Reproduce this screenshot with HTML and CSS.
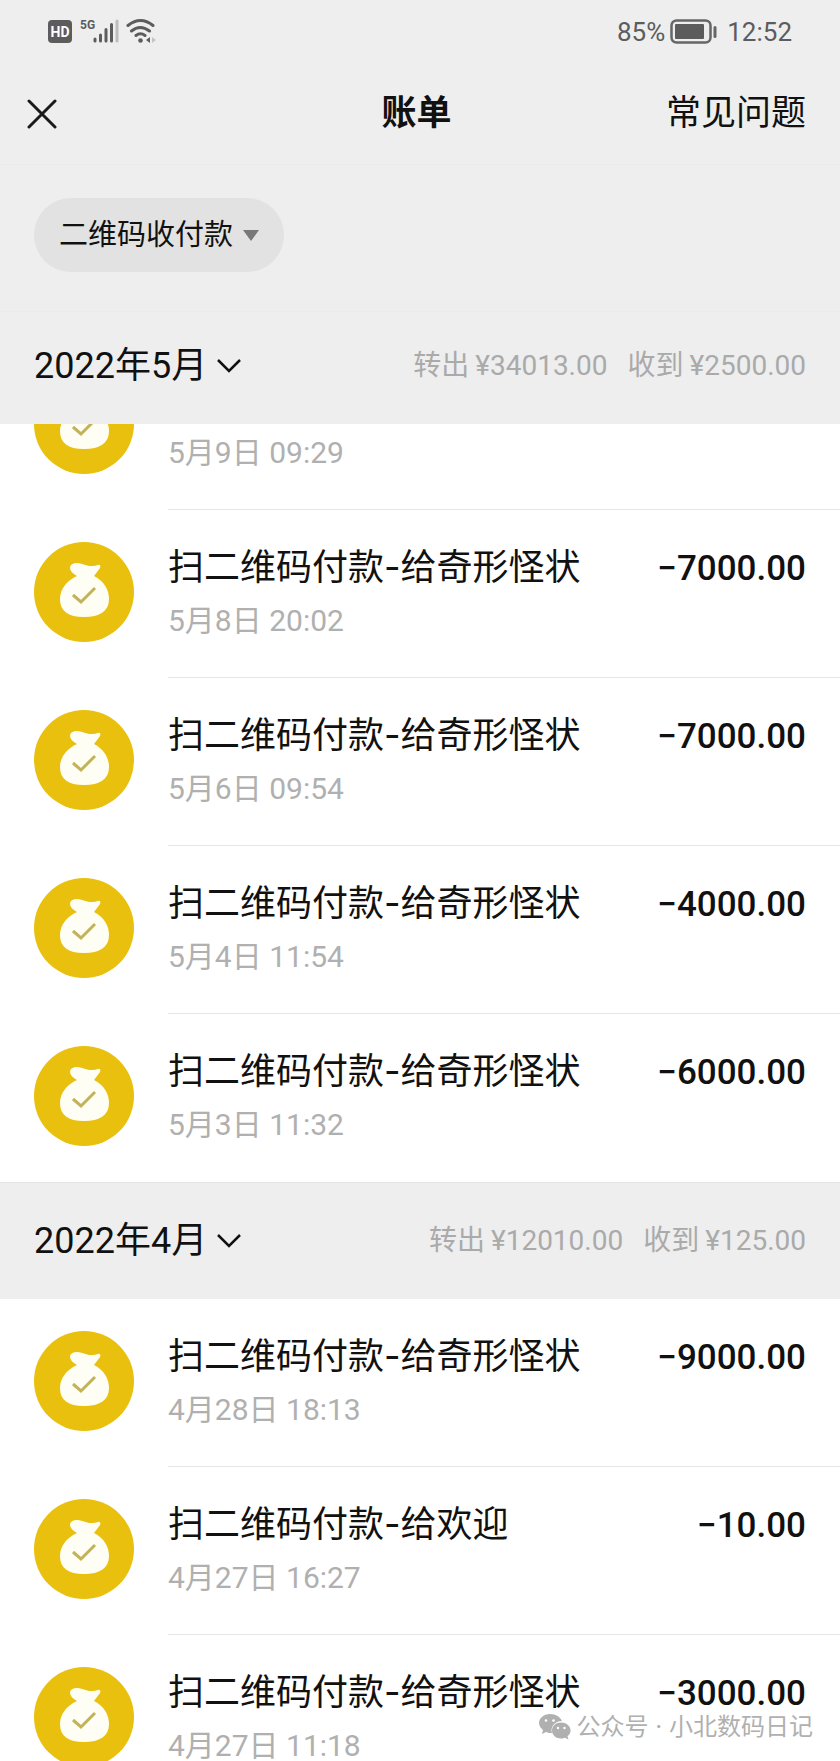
FILE: index.html
```html
<!DOCTYPE html>
<html lang="zh-CN">
<head>
<meta charset="utf-8">
<meta name="viewport" content="width=device-width, initial-scale=1">
<title>账单</title>
<link rel="stylesheet" href="styles.css">
</head>
<body>
<svg class="defs" aria-hidden="true">
  <symbol id="bag" viewBox="0 0 100 100">
    <circle cx="50" cy="50" r="50" fill="#e9c00e"/>
    <path fill="#fffef4" d="M36 25c1-4 7-5 12-3 6 2 11 3 16 1 2-1 3 1 2 3l-6 8c10 5 15 14 15 23 0 12-9 18-25 18s-24-6-24-18c0-9 6-18 17-23-3-2-7-4-7-9z"/>
    <path fill="none" stroke="#c3b258" stroke-width="3" d="M39 53l8 7 14-14"/>
  </symbol>
  <symbol id="chevron" viewBox="0 0 24 14">
    <path fill="none" stroke="#111" stroke-width="2.500" d="M1 1l11 11L23 1"/>
  </symbol>
</svg>

<div class="app">
  <div class="status">
    <svg class="status-icons" viewBox="0 0 110 28" aria-hidden="true">
      <rect x="0" y="2" width="24" height="23" rx="4" fill="#5c5c5c"/>
      <text class="hd" x="12" y="19" text-anchor="middle">HD</text>
      <text class="net" x="32" y="11">5G</text>
      <g stroke="#5c5c5c" stroke-width="3" stroke-linecap="round">
        <path d="M47 21v2M52.500 17v6M58 11.500V23M63.500 6.500V23"/>
        <path stroke="#bdbdbd" d="M69 3v20"/>
      </g>
      <g fill="none" stroke="#5c5c5c" stroke-width="3" stroke-linecap="round">
        <path d="M80 7.500q12.500-10 25 0M83.500 13q8.500-7 18 0M88 17.500q4.500-3.500 9 0"/>
      </g>
      <circle cx="92.500" cy="22.500" r="2.300" fill="#5c5c5c"/>
      <path fill="#5c5c5c" d="M98 22l4-3v6z"/>
      <path fill="#c4c4c4" d="M108 22l-4-3v6z"/>
    </svg>
    <div class="status-group">
      <span>85%</span>
      <svg class="battery" viewBox="0 0 48 26" aria-hidden="true">
        <rect x="1.500" y="1.500" width="39" height="22" rx="5" fill="none" stroke="#666" stroke-width="2.500"/>
        <rect x="5" y="5" width="29" height="15" rx="1" fill="#5c5c5c"/>
        <path stroke="#666" stroke-width="3" stroke-linecap="round" d="M45 8.500v9"/>
      </svg>
      <span>12:52</span>
    </div>
  </div>

  <header class="nav">
    <button class="close" type="button" aria-label="关闭">
      <svg viewBox="0 0 30 30" aria-hidden="true"><path fill="none" stroke="#1a1a1a" stroke-width="3" stroke-linecap="round" d="M2 2l26 26M28 2L2 28"/></svg>
    </button>
    <h1 class="title">账单</h1>
    <a class="help" href="#">常见问题</a>
  </header>

  <div class="filter">
    <button class="pill" type="button">二维码收付款<svg viewBox="0 0 16 11" aria-hidden="true"><path fill="#787878" d="M0 0h16L8 11z"/></svg></button>
  </div>

  <main class="bills">
    <section>
      <div class="month month-top">
        <button class="month-pick" type="button">2022年5月<svg aria-hidden="true"><use href="#chevron"/></svg></button>
        <p class="totals"><span>转出</span><span>¥34013.00</span><span class="in">收到</span><span>¥2500.00</span></p>
      </div>
      <ul class="list">
        <li class="row row-cut">
          <svg class="avatar" aria-hidden="true"><use href="#bag"/></svg>
          <div class="body"><div class="text"><time class="date">5月9日 09:29</time></div></div>
        </li>
        <li class="row">
          <svg class="avatar" aria-hidden="true"><use href="#bag"/></svg>
          <div class="body"><div class="text"><span class="name">扫二维码付款-给奇形怪状</span><time class="date">5月8日 20:02</time></div><span class="amount">−7000.00</span></div>
        </li>
        <li class="row">
          <svg class="avatar" aria-hidden="true"><use href="#bag"/></svg>
          <div class="body"><div class="text"><span class="name">扫二维码付款-给奇形怪状</span><time class="date">5月6日 09:54</time></div><span class="amount">−7000.00</span></div>
        </li>
        <li class="row">
          <svg class="avatar" aria-hidden="true"><use href="#bag"/></svg>
          <div class="body"><div class="text"><span class="name">扫二维码付款-给奇形怪状</span><time class="date">5月4日 11:54</time></div><span class="amount">−4000.00</span></div>
        </li>
        <li class="row">
          <svg class="avatar" aria-hidden="true"><use href="#bag"/></svg>
          <div class="body"><div class="text"><span class="name">扫二维码付款-给奇形怪状</span><time class="date">5月3日 11:32</time></div><span class="amount">−6000.00</span></div>
        </li>
      </ul>
    </section>
    <section>
      <div class="month">
        <button class="month-pick" type="button">2022年4月<svg aria-hidden="true"><use href="#chevron"/></svg></button>
        <p class="totals"><span>转出</span><span>¥12010.00</span><span class="in">收到</span><span>¥125.00</span></p>
      </div>
      <ul class="list">
        <li class="row">
          <svg class="avatar" aria-hidden="true"><use href="#bag"/></svg>
          <div class="body"><div class="text"><span class="name">扫二维码付款-给奇形怪状</span><time class="date">4月28日 18:13</time></div><span class="amount">−9000.00</span></div>
        </li>
        <li class="row">
          <svg class="avatar" aria-hidden="true"><use href="#bag"/></svg>
          <div class="body"><div class="text"><span class="name">扫二维码付款-给欢迎</span><time class="date">4月27日 16:27</time></div><span class="amount">−10.00</span></div>
        </li>
        <li class="row">
          <svg class="avatar" aria-hidden="true"><use href="#bag"/></svg>
          <div class="body"><div class="text"><span class="name">扫二维码付款-给奇形怪状</span><time class="date">4月27日 11:18</time></div><span class="amount">−3000.00</span></div>
        </li>
      </ul>
    </section>
  </main>

  <div class="watermark">
    <svg viewBox="0 0 32 26" aria-hidden="true">
      <path fill="#b0b0b0" d="M11 0C5 0 0 4 0 9c0 3 2 5 4 7l-1 4 4-2c2 1 4 1 6 1-2-6 3-12 10-12C21 3 17 0 11 0z"/>
      <path fill="#b0b0b0" d="M22 8.500c-5 0-9 3.500-9 8s4 8 9 8c1.500 0 3-.3 4-.8l3.500 1.800-1-3.200c2-1.500 3-3.500 3-5.800 0-4.500-4.500-8-9.500-8z"/>
      <g fill="#fff"><circle cx="7" cy="6.500" r="1.300"/><circle cx="14.500" cy="6.500" r="1.300"/><circle cx="19" cy="14" r="1.200"/><circle cx="25.500" cy="14" r="1.200"/></g>
    </svg>
    <span>公众号 · 小北数码日记</span>
  </div>
</div>
</body>
</html>
```
FILE: styles.css
```css
* {
  box-sizing: border-box;
}

body,
h1,
p,
ul {
  margin: 0;
  padding: 0;
}

body {
  background: #fff;
  color: #111;
  font-family: Roboto, "Noto Sans CJK SC", sans-serif;
}

button {
  border: 0;
  padding: 0;
  background: none;
  color: inherit;
  font: inherit;
}

.defs {
  display: none;
}

.app {
  position: relative;
  display: flex;
  flex-direction: column;
  height: 100vh;
  overflow: hidden;
  background: #eee;
}

.status {
  display: flex;
  justify-content: space-between;
  align-items: center;
  height: 64px;
  padding: 0 48px;
  color: #5c5c5c;
  font-size: 26px;
}

.status-group {
  display: flex;
  align-items: center;
}

.status-icons {
  width: 110px;
  height: 28px;
}

.hd {
  fill: #fff;
  font-size: 14px;
  font-weight: 700;
}

.net {
  fill: #5c5c5c;
  font-size: 12px;
  font-weight: 700;
}

.battery {
  width: 48px;
  height: 26px;
  margin: 0 9px 0 5px;
}

.nav {
  display: grid;
  grid-template-columns: 1fr auto 1fr;
  align-items: center;
  height: 100px;
  padding: 0 34px 0 27px;
  font-size: 35px;
  line-height: 48px;
}

.close {
  display: flex;
  justify-self: start;
}

.close svg {
  width: 30px;
  height: 30px;
}

.title {
  font-size: 35px;
  font-weight: 700;
}

.help {
  justify-self: end;
  color: inherit;
  text-decoration: none;
}

.filter {
  display: flex;
  align-items: center;
  height: 148px;
  padding: 0 34px 6px;
  border-top: 1px solid #eaeaea;
  border-bottom: 1px solid #eaeaea;
}

.pill {
  display: flex;
  align-items: center;
  gap: 10px;
  height: 74px;
  padding: 0 25px;
  border-radius: 37px;
  background: #e2e2e2;
  font-size: 29px;
  line-height: 40px;
}

.pill svg {
  width: 16px;
  height: 11px;
}

.bills {
  flex: 1;
  min-height: 0;
  overflow: hidden;
}

.month {
  display: flex;
  justify-content: space-between;
  align-items: center;
  height: 117px;
  padding: 0 34px;
  border-top: 1px solid #e4e4e4;
  background: #eee;
}

.month-top {
  height: 112px;
  padding-bottom: 4px;
  border-top: 0;
}

.month-pick {
  display: flex;
  align-items: center;
  gap: 10px;
  font-size: 36px;
  line-height: 48px;
}

.month-pick svg {
  width: 24px;
  height: 14px;
}

.totals {
  display: flex;
  gap: 6px;
  color: #aaa;
  font-size: 28px;
  line-height: 40px;
}

.in {
  margin-left: 14px;
}

.list {
  list-style: none;
  background: #fff;
}

.row {
  display: flex;
  gap: 34px;
  height: 168px;
  padding-left: 34px;
}

.avatar {
  flex: none;
  width: 100px;
  height: 100px;
  margin-top: 32px;
}

.body {
  flex: 1;
  display: flex;
  justify-content: space-between;
  padding: 32px 34px 0 0;
  border-bottom: 1px solid #e6e6e6;
}

.row:last-child .body {
  border-bottom: 0;
}

.text {
  display: flex;
  flex-direction: column;
  gap: 14px;
}

.name {
  font-family: Inter, "Noto Sans CJK SC", sans-serif;
  font-size: 36px;
  line-height: 50px;
}

.date {
  color: #b0b0b0;
  font-size: 30px;
  line-height: 30px;
}

.amount {
  font-size: 35px;
  font-weight: 500;
  line-height: 54px;
}

/* Row partly scrolled under the month bar */
.row-cut {
  align-items: flex-end;
  height: 86px;
  overflow: hidden;
}

.row-cut .avatar {
  margin: 0 0 36px;
}

.row-cut .body {
  padding: 0 34px 41px 0;
}

.watermark {
  position: absolute;
  right: 27px;
  bottom: 18px;
  display: flex;
  align-items: center;
  gap: 6px;
  color: #b0b0b0;
  font-family: Inter, "Noto Sans CJK SC", sans-serif;
  font-size: 24px;
  line-height: 32px;
}

.watermark svg {
  width: 32px;
  height: 26px;
}
```
